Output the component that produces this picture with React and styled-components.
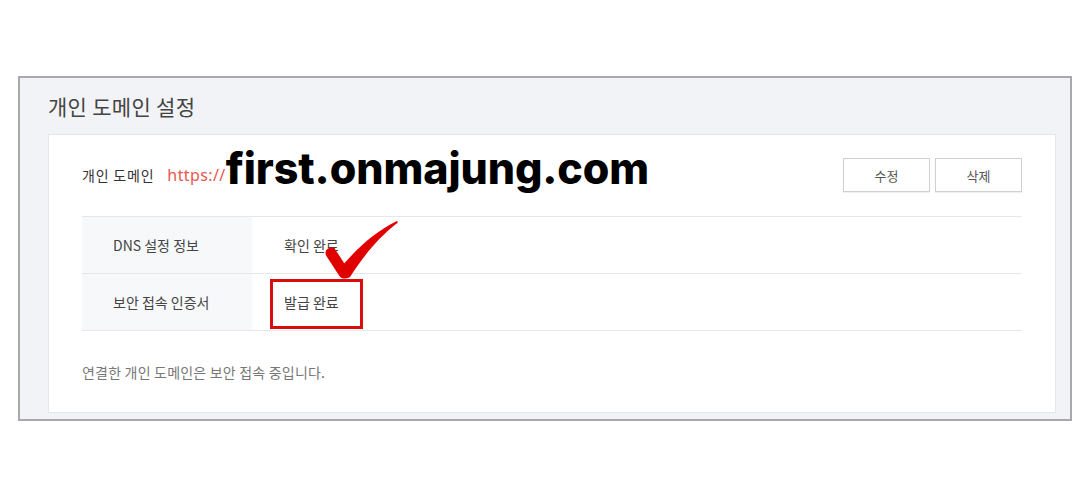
import React from "react";
import styled, { createGlobalStyle } from "styled-components";

const Global = createGlobalStyle`
  html, body { margin: 0; padding: 0; background: #ffffff; }
  body { font-family: "Noto Sans CJK KR", "Noto Sans", sans-serif; }
`;

const Frame = styled.section`
  box-sizing: border-box;
  width: 1054px;
  margin: 76px 0 0 18px;
  border: 2px solid #a9a9ab;
  background: #f2f3f6;
  padding: 14px 14px 6px 28px;
  display: flex;
  flex-direction: column;
  gap: 14px;
`;

const Title = styled.h2`
  margin: 0;
  height: 28px;
  line-height: 28px;
  font-size: 21px;
  font-weight: 400;
  color: #444;
  letter-spacing: 0.3px;
`;

const Card = styled.div`
  box-sizing: border-box;
  background: #fff;
  border: 1px solid #e5e6ea;
  padding: 23px 33px 30px 33px;
  display: flex;
  flex-direction: column;
`;

const Header = styled.div`
  height: 34px;
  display: flex;
  align-items: center;
`;

const Label = styled.span`
  font-size: 14px;
  color: #333;
  letter-spacing: 0.8px;
  margin-right: 13px;
`;

const Scheme = styled.span`
  font-family: "Noto Sans", sans-serif;
  font-size: 16px;
  letter-spacing: 0.4px;
  color: #e8574f;
`;

const Domain = styled.span`
  font-family: Inter, "Noto Sans", sans-serif;
  font-weight: 800;
  font-size: 43px;
  line-height: 1;
  color: #000;
  letter-spacing: -0.1px;
  background: #fff;
  padding-right: 2px;
  margin-bottom: 13px;
`;

const Spacer = styled.div`
  flex: 1;
`;

const Buttons = styled.div`
  display: flex;
  gap: 5px;
`;

const Button = styled.button`
  box-sizing: border-box;
  width: 87px;
  height: 34px;
  border: 1px solid #cfd0d4;
  background: #fff;
  font-family: "Noto Sans CJK KR", sans-serif;
  font-size: 13px;
  color: #555;
  box-shadow: 0 1px 1px rgba(0, 0, 0, 0.06);
  padding: 0;
`;

const Table = styled.div`
  margin-top: 24px;
  border-top: 1px solid #e6e7eb;
  display: flex;
  flex-direction: column;
`;

const Row = styled.div`
  display: flex;
  height: 56px;
  border-bottom: 1px solid #e6e7eb;
`;

const HeadCell = styled.div`
  box-sizing: border-box;
  width: 170px;
  flex: none;
  background: #f7f8fa;
  padding-left: 31px;
  display: flex;
  align-items: center;
  font-size: 14px;
  color: #444;
`;

const ValueCell = styled.div`
  position: relative;
  flex: 1;
  padding-left: 32px;
  display: flex;
  align-items: center;
  font-size: 14px;
  color: #444;
`;

const Highlight = styled.div`
  position: absolute;
  left: 18px;
  top: 5px;
  width: 93px;
  height: 50px;
  box-sizing: border-box;
  border: 3px solid #d90d0d;
`;

const Check = styled.svg`
  position: absolute;
  left: 72px;
  top: -56px;
  width: 76px;
  height: 62px;
`;

const Note = styled.p`
  margin: 31px 0 0;
  font-size: 14px;
  line-height: 20px;
  color: #777;
  letter-spacing: 0.2px;
`;

function CheckMark() {
  return (
    <Check viewBox="0 0 76 62">
      <path
        d="M7 35 L20 55"
        stroke="#e00000"
        strokeWidth="11"
        strokeLinecap="round"
        fill="none"
      />
      <path
        d="M14 53 C30 33 50 14 73 3 C74 4 74 5 72 6 C54 20 38 40 26 59 C22 62 17 60 14 53 Z"
        fill="#e00000"
      />
    </Check>
  );
}

export default function App() {
  return (
    <>
      <Global />
      <Frame>
        <Title>개인 도메인 설정</Title>
        <Card>
          <Header>
            <Label>개인 도메인</Label>
            <Scheme>https://</Scheme>
            <Domain>first.onmajung.com</Domain>
            <Spacer />
            <Buttons>
              <Button>수정</Button>
              <Button>삭제</Button>
            </Buttons>
          </Header>
          <Table>
            <Row>
              <HeadCell>DNS 설정 정보</HeadCell>
              <ValueCell>확인 완료</ValueCell>
            </Row>
            <Row>
              <HeadCell>보안 접속 인증서</HeadCell>
              <ValueCell>
                발급 완료
                <Highlight />
                <CheckMark />
              </ValueCell>
            </Row>
          </Table>
          <Note>연결한 개인 도메인은 보안 접속 중입니다.</Note>
        </Card>
      </Frame>
    </>
  );
}
